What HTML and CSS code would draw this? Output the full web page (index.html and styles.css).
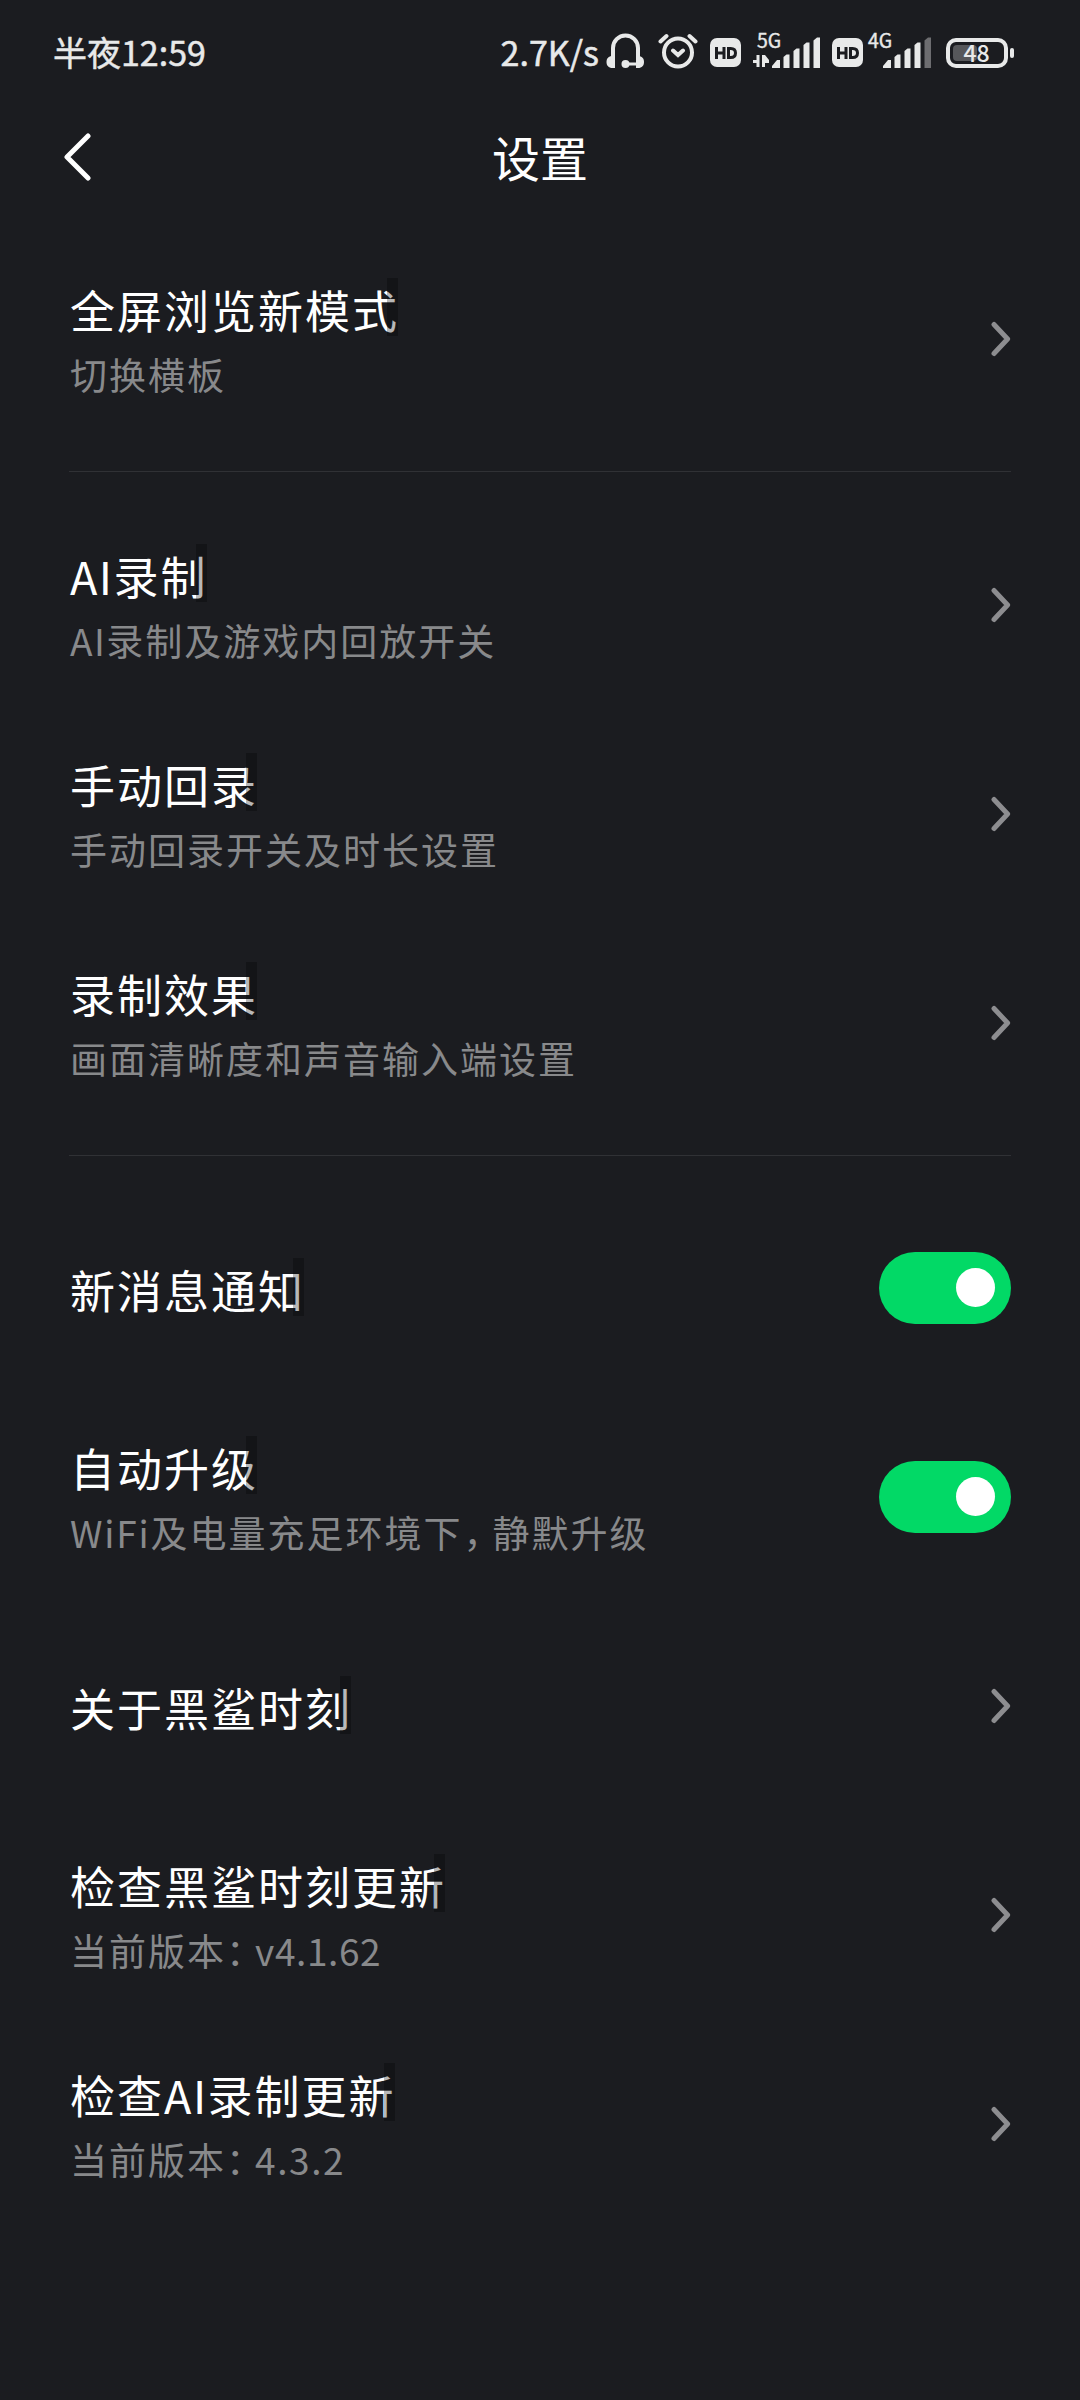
FILE: index.html
```html
<!DOCTYPE html>
<html lang="zh-CN">
<head>
<meta charset="utf-8">
<title>设置</title>
<link rel="stylesheet" href="styles.css">
</head>
<body>
<svg class="defs" width="0" height="0" aria-hidden="true">
  <symbol id="chevron" viewBox="0 0 20 36"><path d="M3 3.5 16.6 18 3 32.5" fill="none" stroke="currentColor" stroke-width="5" stroke-linecap="round" stroke-linejoin="round"/></symbol>
  <symbol id="hd" viewBox="0 0 31 29"><rect width="31" height="29" rx="7" fill="#e8e9e9"/><path d="M6.5 9v12M14 9v12M6.5 15H14M18.5 10.5h2.2c3.4 0 4.8 1.8 4.8 4.5s-1.4 4.5-4.8 4.500h-2.200z" fill="none" stroke="#1b1c20" stroke-width="3"/></symbol>
</svg>
<header class="status">
  <span class="time">半夜12:59</span>
  <div class="indicators">
    <span class="speed">2.7K/s</span>
    <svg class="headset" width="38" height="36" viewBox="0 0 38 36"><path d="M7 27V15a12.500 12.500 0 0 1 25 0v12" fill="none" stroke="#e8e9e9" stroke-width="4"/><path d="M9 23v12H6.500C2.500 35 .5 32.500.5 29s2-6 6-6zM30 23v12h2c4 0 6-2.500 6-6s-2-6-6-6z" fill="#e8e9e9"/><circle cx="19.500" cy="31" r="4" fill="#e8e9e9"/><path d="M19 31h13" stroke="#e8e9e9" stroke-width="3"/></svg>
    <svg class="alarm" width="40" height="36" viewBox="0 0 40 36"><g fill="none" stroke="#e8e9e9" stroke-width="4" stroke-linecap="round"><circle cx="20" cy="19.500" r="14"/><path d="m2.500 8.500 6-5.500M37.500 8.500l-6-5.500M15 17.500l5 4.500 5-4.500"/></g></svg>
    <svg class="hd" width="31" height="29"><use href="#hd"/></svg>
    <svg class="signal" width="67" height="44" viewBox="0 -8 67 44"><text class="net" x="4" y="15">5G</text><path d="M6.500 22v12h-3v-4H0v-3h3.500v-5zM9 34V22h3l4 5v3h-4v4z" fill="#e8e9e9"/><g fill="#e8e9e9"><path d="M19 35v-2l5-6h3v8z"/><path d="M30.500 35V24l3-2.500h3V35z"/><path d="M40.500 35V18l3-2.500h3V35z"/><path d="M50.500 35V12l3-2.500h3V35z"/><path d="M60.500 35V7.500L64 4.500h3V35z"/></g></svg>
    <svg class="hd" width="31" height="29"><use href="#hd"/></svg>
    <svg class="signal second" width="64" height="44" viewBox="0 -8 64 44"><text class="net" x="1" y="15">4G</text><g fill="#e8e9e9"><path d="M16 35v-2l5-6h3v8z"/><path d="M27.500 35V24l3-2.500h3V35z"/><path d="M37.500 35V18l3-2.500h3V35z"/><path d="M47.500 35V12l3-2.500h3V35z"/><path d="M57.500 35V7.500L61 4.500h3V35z" opacity=".4"/></g></svg>
    <svg class="battery" width="68" height="38" viewBox="0 -4 68 38"><rect x="2" y="2" width="58" height="26" rx="8" fill="none" stroke="#e8e9e9" stroke-width="4"/><rect x="7" y="7" width="24" height="16" rx="4" fill="#56575a"/><rect x="64" y="10" width="4" height="10" rx="2" fill="#e8e9e9"/><text class="level" x="17.500" y="23.500">48</text></svg>
  </div>
</header>
<nav class="bar">
  <svg class="back" width="28" height="48" viewBox="0 0 28 48"><path d="M25 3 4 24l21 21" fill="none" stroke="#fff" stroke-width="5" stroke-linecap="round" stroke-linejoin="round"/></svg>
  <h1>设置</h1>
</nav>
<main>
  <section>
    <div class="row"><div class="copy"><h2>全屏浏览新模式</h2><p>切换横板</p></div><svg class="arrow"><use href="#chevron"/></svg></div>
  </section>
  <section>
    <div class="row"><div class="copy"><h2><span class="latin">AI</span>录制</h2><p><span class="latin">AI</span>录制及游戏内回放开关</p></div><svg class="arrow"><use href="#chevron"/></svg></div>
    <div class="row"><div class="copy"><h2>手动回录</h2><p>手动回录开关及时长设置</p></div><svg class="arrow"><use href="#chevron"/></svg></div>
    <div class="row"><div class="copy"><h2>录制效果</h2><p>画面清晰度和声音输入端设置</p></div><svg class="arrow"><use href="#chevron"/></svg></div>
  </section>
  <section>
    <div class="row single"><div class="copy"><h2>新消息通知</h2></div><span class="toggle"></span></div>
    <div class="row"><div class="copy"><h2>自动升级</h2><p><span class="wifi">WiFi</span>及电量充足环境下<span class="comma">，</span>静默升级</p></div><span class="toggle"></span></div>
    <div class="row single"><div class="copy"><h2>关于黑鲨时刻</h2></div><svg class="arrow"><use href="#chevron"/></svg></div>
    <div class="row"><div class="copy"><h2>检查黑鲨时刻更新</h2><p>当前版本<span class="colon">：</span><span class="version">v4.1.62</span></p></div><svg class="arrow"><use href="#chevron"/></svg></div>
    <div class="row"><div class="copy"><h2>检查<span class="latin">AI</span>录制更新</h2><p>当前版本<span class="colon">：</span><span class="version short">4.3.2</span></p></div><svg class="arrow"><use href="#chevron"/></svg></div>
  </section>
</main>
</body>
</html>
```
FILE: styles.css
```css
* { box-sizing: border-box; margin: 0; padding: 0; }
body {
  height: 2400px;
  background: #1b1c20;
  color: #fff;
  font-family: "Noto Sans CJK SC", sans-serif;
  overflow: hidden;
}
svg { display: block; flex: none; }
.defs { position: absolute; }

.status {
  height: 105px;
  padding: 0 66px 0 53px;
  display: flex;
  justify-content: space-between;
  align-items: center;
  color: #e8e9e9;
  font-size: 34px;
  line-height: 50px;
  white-space: nowrap;
}
.time, .speed { margin-top: -1px; -webkit-text-stroke: .5px #e8e9e9; }
.indicators { display: flex; align-items: center; }
.headset { margin: -4px 14px 0 7px; }
.alarm { margin-right: 12px; margin-top: -3px; }
.hd { margin-right: 12px; margin-top: -1px; }
.signal { margin-top: -12px; margin-right: 12px; }
.signal.second { margin-left: -8px; margin-right: 15px; }
.net { font-size: 19.5px; fill: #e8e9e9; stroke: #e8e9e9; stroke-width: .4px; }
.level { font-size: 23px; font-weight: 500; fill: #e8e9e9; }

.bar {
  height: 104px;
  display: grid;
  grid-template-columns: 100px 1fr 100px;
  align-items: center;
}
.back { justify-self: end; margin-right: 9px; }
h1 { font-size: 48px; font-weight: 400; line-height: 70px; text-align: center; padding-bottom: 2px; }

main { padding: 25px 69px 0; }
section + section { border-top: 1px solid #303135; margin-top: 28px; padding-top: 28px; }
section:last-child { padding-top: 27px; }
.row {
  height: 209px;
  display: flex;
  justify-content: space-between;
  align-items: center;
  white-space: nowrap;
}
.single .copy { padding-bottom: 2px; }
h2 {
  position: relative;
  width: max-content;
  height: 58px;
  padding-left: 1px;
  font-size: 45px;
  font-weight: 400;
  line-height: 64px;
  letter-spacing: 2px;
}
h2::after {
  content: "";
  position: absolute;
  right: 1px;
  top: 0;
  width: 11px;
  height: 58px;
  background: rgba(0, 0, 0, .28);
}
p {
  height: 52px;
  margin-top: 11px;
  padding-left: 1px;
  color: #88898b;
  font-size: 37px;
  line-height: 54px;
  letter-spacing: 2px;
}
.latin { letter-spacing: 1.5px; }
.wifi { letter-spacing: 1.8px; }
.colon, .comma { font-feature-settings: "halt"; }
.colon { padding-right: 8.5px; }
.comma { padding: 0 8.5px 0 1px; }
.version { letter-spacing: .6px; }
.version.short { letter-spacing: 1.6px; }
.arrow { width: 20px; height: 36px; color: #8d8d90; }
.toggle {
  width: 132px;
  height: 72px;
  padding: 16px;
  border-radius: 36px;
  background: #02d966;
  display: flex;
  justify-content: flex-end;
}
.toggle::after { content: ""; width: 39px; height: 39px; border-radius: 50%; background: #fff; }
```
